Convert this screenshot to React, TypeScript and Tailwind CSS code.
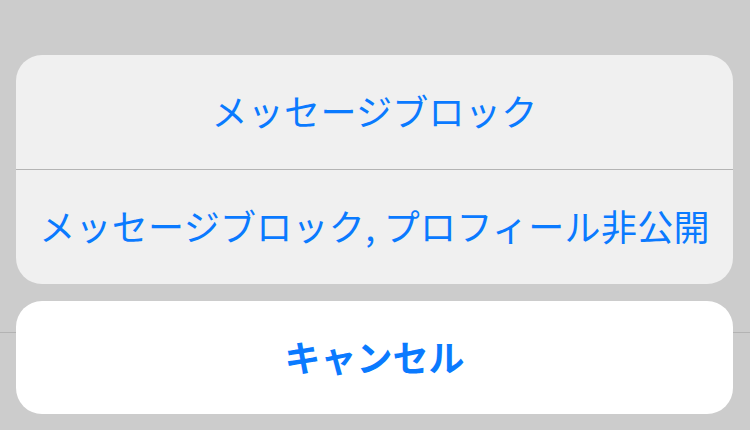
// iOS-style action sheet over a dimmed page, in Japanese.

const FONT = '"Noto Sans CJK JP", "Noto Sans", sans-serif';

const actions = ['メッセージブロック', 'メッセージブロック, プロフィール非公開'];

export default function App() {
  return (
    <div
      className="relative w-[750px] h-[430px] overflow-hidden bg-[#cccccc]"
      style={{ fontFamily: FONT }}
    >
      {/* hairline of the page underneath the sheet */}
      <div className="absolute left-0 right-0 top-[332px] h-px bg-[#b3b3b3]" />

      <div className="relative flex flex-col gap-[17px] pt-[55px] pl-4 pr-[17px]">
        <div className="flex flex-col rounded-[26px] bg-[#f0f0f0] overflow-hidden">
          {actions.map((label, i) => (
            <div key={label}>
              {i > 0 && <div className="h-px bg-[#b4b4b4]" />}
              <button className="w-full h-[114px] pb-1 flex items-center justify-center text-[36px] leading-none text-[#0a7aff] tracking-[0.3px]">
                {label}
              </button>
            </div>
          ))}
        </div>

        <button className="h-[113px] pb-1 rounded-[26px] bg-white flex items-center justify-center text-[36px] leading-none font-bold text-[#0a7aff]">
          キャンセル
        </button>
      </div>
    </div>
  );
}
